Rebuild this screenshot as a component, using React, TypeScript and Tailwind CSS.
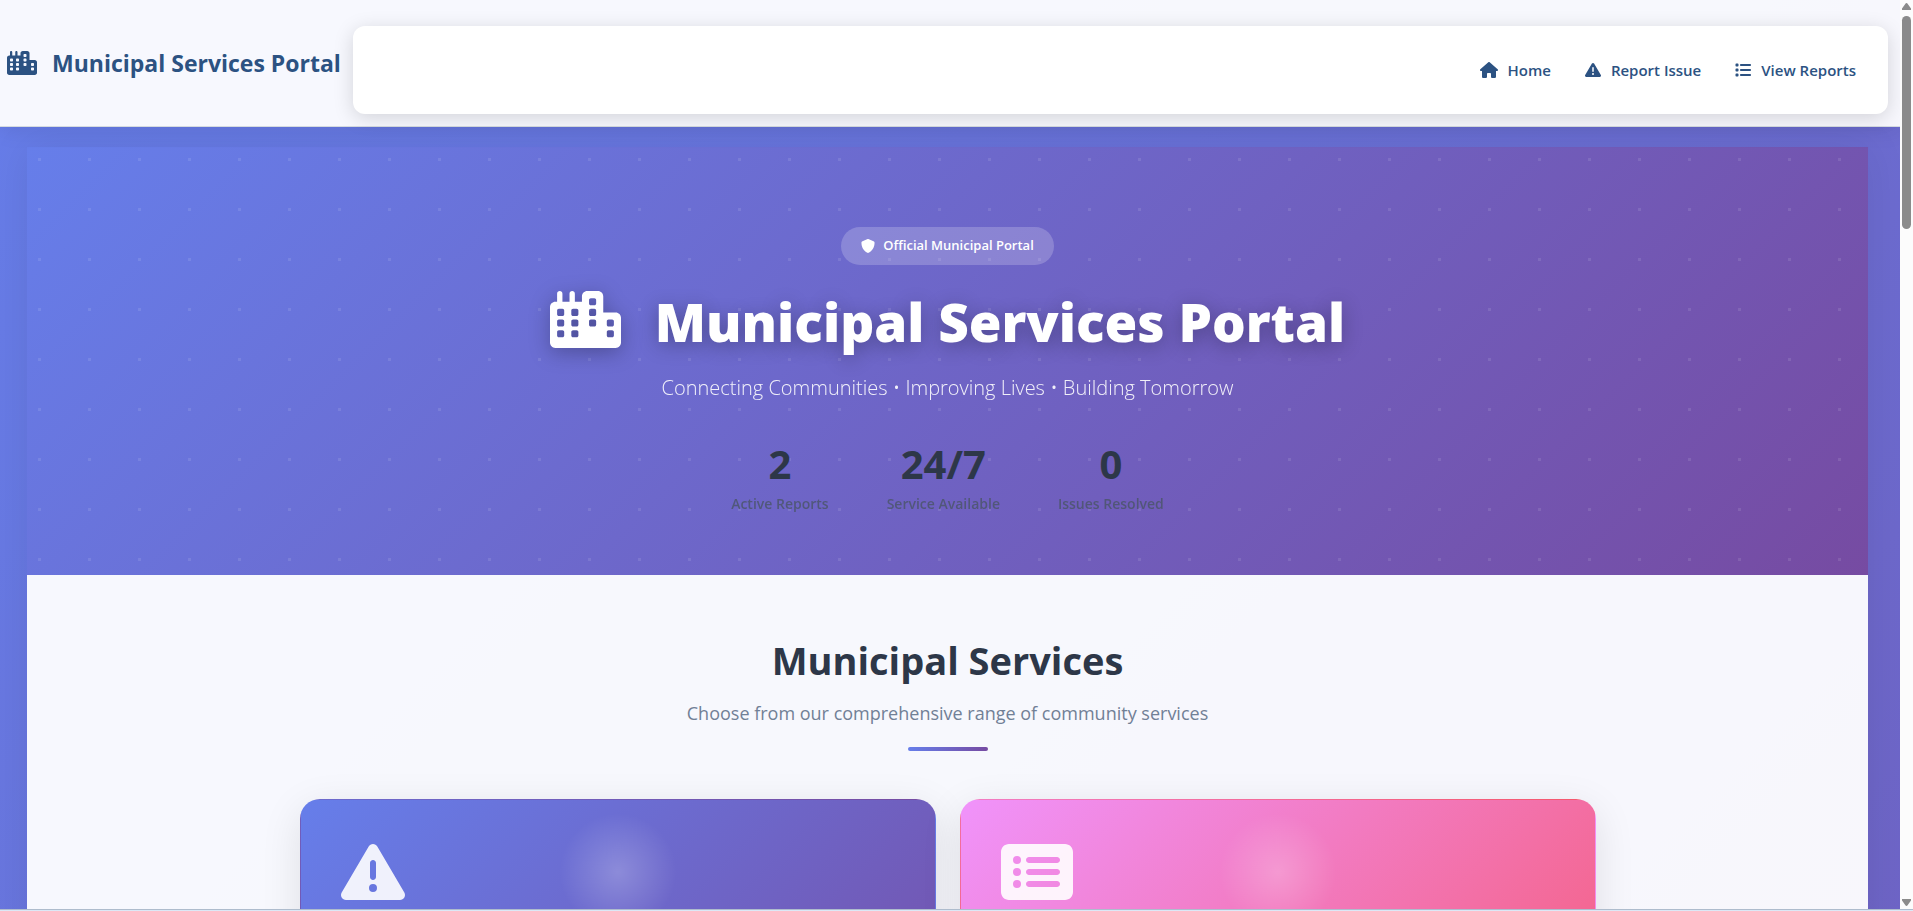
import {
  FaCity,
  FaHouse,
  FaList,
  FaRectangleList,
  FaShield,
  FaTriangleExclamation,
} from 'react-icons/fa6';

const navLinks = [
  { label: 'Home', icon: FaHouse, size: 'h-4 w-[18px]' },
  { label: 'Report Issue', icon: FaTriangleExclamation, size: 'size-4' },
  { label: 'View Reports', icon: FaList, size: 'size-4' },
];

const stats = [
  { value: '2', label: 'Active Reports' },
  { value: '24/7', label: 'Service Available' },
  { value: '0', label: 'Issues Resolved' },
];

const services = [
  {
    id: 'report',
    icon: FaTriangleExclamation,
    size: 'size-16',
    background: 'bg-[linear-gradient(135deg,#667eea_0%,#764ba2_100%)]',
  },
  {
    id: 'view',
    icon: FaRectangleList,
    size: 'h-16 w-[72px]',
    background: 'bg-[linear-gradient(135deg,#f093fb_0%,#f5576c_100%)]',
  },
];

function Header() {
  return (
    <header className="relative z-10 flex shrink-0 items-start border-b border-[#d5dbe0] bg-white/95 pt-[26px] pr-3 pb-3 shadow-[0_4px_20px_rgba(0,0,0,0.08)]">
      <a
        href="#"
        className="flex h-[74px] shrink-0 items-center gap-[15px] pr-3 pl-[7px] text-[23px] font-bold text-[#2c5282]"
      >
        <FaCity className="h-6 w-[30px]" />
        Municipal Services Portal
      </a>
      <nav className="flex h-[88px] flex-1 items-center justify-end gap-[34px] rounded-xl bg-white pr-8 shadow-[0_4px_20px_rgba(0,0,0,0.15)]">
        {navLinks.map(({ label, icon: Icon, size }) => (
          <a
            key={label}
            href="#"
            className="flex items-center gap-[10px] text-[15px] font-semibold text-[#2c5282]"
          >
            <Icon className={size} />
            {label}
          </a>
        ))}
      </nav>
    </header>
  );
}

function Hero() {
  return (
    <section className="bg-[radial-gradient(circle_at_25%_25%,rgba(255,255,255,0.1)_2px,transparent_2px),linear-gradient(135deg,#667eea_0%,#764ba2_100%)] bg-[length:50px_50px,100%_100%] pt-20 pb-[59px] text-white">
      <div className="flex flex-col items-center">
        <div className="flex h-[38px] items-center gap-2 rounded-full bg-white/20 px-5 text-[13px] font-semibold">
          <FaShield className="size-[14px]" />
          Official Municipal Portal
        </div>
        <h1 className="mt-[22px] flex h-[68px] items-center gap-[34px] text-[53px] leading-none font-extrabold [text-shadow:0_4px_20px_rgba(0,0,0,0.3)]">
          <FaCity className="mb-1 h-[57px] w-[71px] drop-shadow-[0_4px_10px_rgba(0,0,0,0.3)]" />
          Municipal Services Portal
        </h1>
        <p className="mt-[15px] text-[20px] leading-9 font-light opacity-90">
          Connecting Communities • Improving Lives • Building Tomorrow
        </p>
        <dl className="mt-[38px] flex gap-[58px] text-center text-[#2d3748]">
          {stats.map(({ value, label }) => (
            <div key={label} className="flex flex-col-reverse">
              <dt className="mt-2 text-[14px] leading-6 font-semibold text-[#4a5568] opacity-80">{label}</dt>
              <dd className="text-[40px] leading-10 font-bold">{value}</dd>
            </div>
          ))}
        </dl>
      </div>
    </section>
  );
}

function Services() {
  return (
    <section className="flex-1 bg-white/95 pt-[60px]">
      <div className="flex flex-col items-center">
        <h2 className="text-[38px] leading-[50px] font-bold text-[#2d3748]">Municipal Services</h2>
        <p className="mt-3 text-[18px] leading-8 text-[#718096]">
          Choose from our comprehensive range of community services
        </p>
        <div className="mt-[18px] h-1 w-20 rounded-sm bg-[linear-gradient(90deg,#667eea,#764ba2)]" />
      </div>
      <div className="mx-auto mt-12 grid max-w-[1296px] grid-cols-2 gap-6">
        {services.map(({ id, icon: Icon, size, background }) => (
          <article
            key={id}
            className={`relative min-h-[390px] overflow-hidden rounded-[20px] border border-transparent p-10 shadow-[0_10px_40px_rgba(0,0,0,0.1)] ${background}`}
          >
            <div className="absolute top-[-6px] left-1/2 size-[156px] -translate-x-1/2 bg-[radial-gradient(circle_closest-side,rgba(255,255,255,0.22)_0%,transparent_75%)]" />
            <Icon className={`text-white/90 ${size}`} />
          </article>
        ))}
      </div>
    </section>
  );
}

function Scrollbar() {
  return (
    <div aria-hidden="true" className="flex w-[13px] shrink-0 flex-col items-center bg-[#fcfcfc] py-[3px]">
      <svg viewBox="0 0 9 7" className="h-[7px] w-[9px] fill-[#8b8b8b]">
        <path d="M4.5 0 Q5.2 0 5.6 .7 L9 5.5 V7 H0 V5.5 L3.4 .7 Q3.8 0 4.5 0Z" />
      </svg>
      <div className="mt-[6px] h-[213px] w-[9px] rounded-full bg-[#8b8b8b]" />
      <svg viewBox="0 0 9 7" className="mt-auto h-[7px] w-[9px] fill-[#8b8b8b]">
        <path d="M4.5 7 Q5.2 7 5.6 6.3 L9 1.5 V0 H0 V1.5 L3.4 6.3 Q3.8 7 4.5 7Z" />
      </svg>
    </div>
  );
}

export default function App() {
  return (
    <div className="flex h-screen flex-col overflow-hidden bg-[#dce8f6] pb-px font-['Open_Sans','Noto_Sans',sans-serif]">
      <div className="flex min-h-0 flex-1 border-b border-[#aebccd]">
        <div className="flex min-w-0 flex-1 flex-col overflow-hidden bg-[linear-gradient(135deg,#667eea_0%,#764ba2_100%)] bg-[length:100%_3730px]">
          <Header />
          <main className="mt-5 mr-8 ml-[27px] flex flex-1 shrink-0 flex-col shadow-[0_0_40px_rgba(0,0,0,0.08)]">
            <Hero />
            <Services />
          </main>
        </div>
        <Scrollbar />
      </div>
    </div>
  );
}
